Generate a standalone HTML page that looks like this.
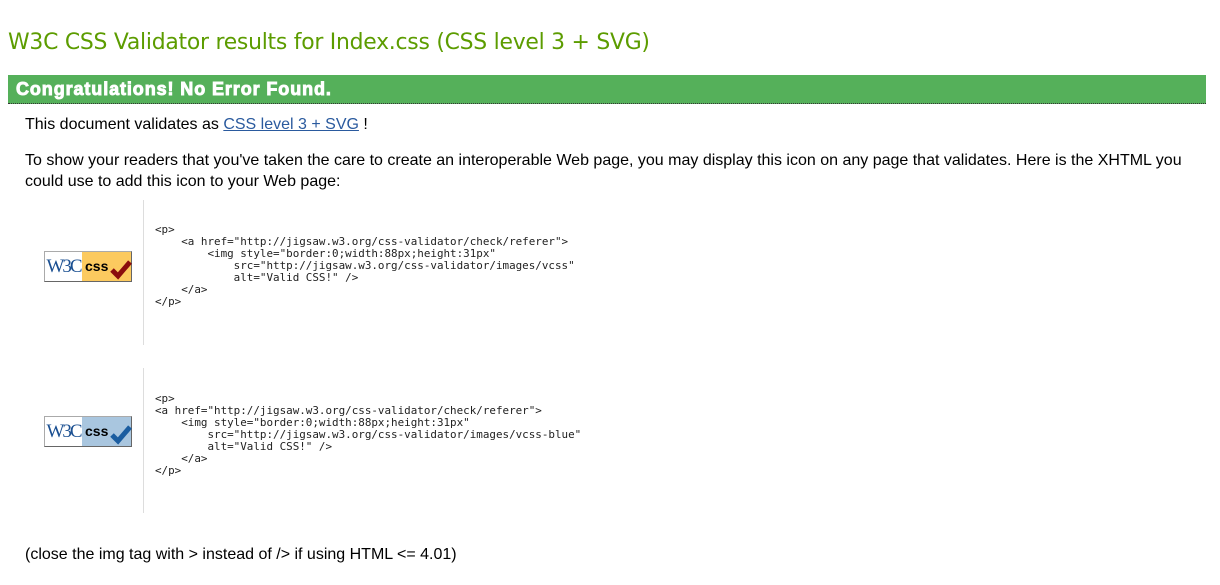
<!DOCTYPE html>
<html><head><meta charset="utf-8"><style>
body{margin:0;background:#fff;font-family:"Liberation Sans",Arial,sans-serif;color:#000;}
h2{position:absolute;left:8px;top:30px;margin:0;font-weight:normal;font-size:21.9px;color:#5c9c00;font-family:"DejaVu Sans","Liberation Sans",sans-serif;letter-spacing:-0.25px}
.bar{position:absolute;left:8px;top:75px;width:1198px;height:28px;background:#55b05a;border-bottom:1px dotted #333;}
.bar span{position:absolute;left:8px;top:4px;color:#fff;font-weight:bold;font-size:18px;font-family:"Liberation Sans",Arial,sans-serif;-webkit-text-stroke:0.9px #fff;letter-spacing:0.9px}
.t{position:absolute;left:25px;font-size:16px;line-height:21px;}
a{color:#2a5a9e;}
.vl{position:absolute;left:143px;width:1px;background:#ddd;}
pre{position:absolute;left:155px;margin:0;font-family:"DejaVu Sans Mono","Liberation Mono",monospace;font-size:10.9px;line-height:12px;color:#222;}
.badge{position:absolute;left:44px;width:86px;height:29px;border:1px solid #aaa;border-right-color:#666;border-bottom-color:#666;display:flex;}
.w3{width:37px;background:#fff;color:#1a4f91;font-family:"Liberation Serif",serif;font-size:19px;line-height:29px;text-align:center;letter-spacing:-2px;font-weight:normal}
.css{flex:1;position:relative;font-weight:bold;font-size:14px;line-height:29px;padding-left:3px}
</style></head><body>
<h2>W3C CSS Validator results for Index.css (CSS level 3 + SVG)</h2>
<div class="bar"><span>Congratulations! No Error Found.</span></div>
<div class="t" style="top:114px">This document validates as <a href="#">CSS level 3 + SVG</a> !</div>
<div class="t" style="top:150px;width:1170px">To show your readers that you've taken the care to create an interoperable Web page, you may display this icon on any page that validates. Here is the XHTML you could use to add this icon to your Web page:</div>
<div class="vl" style="top:200px;height:145px"></div>
<div class="vl" style="top:368px;height:145px"></div>
<div class="badge" style="top:251px"><div class="w3">W3C</div><div class="css" style="background:#fcca5f">css<svg style="position:absolute;left:28px;top:6px" width="22" height="22" viewBox="0 0 22 22"><path d="M2 12 L8 18 L20 4" stroke="#8b0d0d" stroke-width="5" fill="none"/></svg></div></div>
<div class="badge" style="top:416px"><div class="w3">W3C</div><div class="css" style="background:#a9c6df">css<svg style="position:absolute;left:28px;top:6px" width="22" height="22" viewBox="0 0 22 22"><path d="M2 12 L8 18 L20 4" stroke="#1b5da0" stroke-width="5" fill="none"/></svg></div></div>
<pre style="top:224px">&lt;p&gt;
    &lt;a href="http://jigsaw.w3.org/css-validator/check/referer"&gt;
        &lt;img style="border:0;width:88px;height:31px"
            src="http://jigsaw.w3.org/css-validator/images/vcss"
            alt="Valid CSS!" /&gt;
    &lt;/a&gt;
&lt;/p&gt;</pre>
<pre style="top:393px">&lt;p&gt;
&lt;a href="http://jigsaw.w3.org/css-validator/check/referer"&gt;
    &lt;img style="border:0;width:88px;height:31px"
        src="http://jigsaw.w3.org/css-validator/images/vcss-blue"
        alt="Valid CSS!" /&gt;
    &lt;/a&gt;
&lt;/p&gt;</pre>
<div class="t" style="top:544px">(close the img tag with &gt; instead of /&gt; if using HTML &lt;= 4.01)</div>
</body></html>
